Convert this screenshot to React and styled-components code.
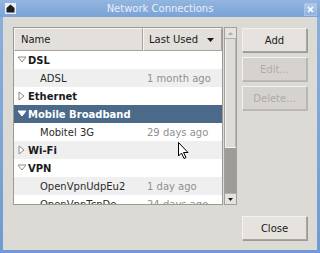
import React from "react";
import styled, { createGlobalStyle } from "styled-components";

const Global = createGlobalStyle`
  html, body { margin: 0; padding: 0; background: #dcdad5; }
  body { font-family: "DejaVu Sans", "Liberation Sans", sans-serif; }
`;

const Window = styled.div`
  width: 320px;
  height: 253px;
  box-sizing: border-box;
  display: flex;
  flex-direction: column;
  background: linear-gradient(to bottom, #8db0dc, #6f9bd2);
  padding: 0 3px 3px 3px;
  position: relative;
  overflow: hidden;
`;

const TitleBar = styled.div`
  height: 17px;
  display: flex;
  align-items: center;
  justify-content: space-between;
  margin: 0 -3px;
  padding: 0 3px 0 5px;
  background: linear-gradient(to bottom, #93b5df, #7aa3d6);
  color: #e9eff8;
  font-size: 10px;
  position: relative;
`;

const Title = styled.div`
  position: absolute;
  left: 0;
  right: 0;
  text-align: center;
  line-height: 17px;
  pointer-events: none;
`;

const CloseBox = styled.div`
  width: 11px;
  height: 11px;
  border: 1px solid #a9c3e6;
  background: linear-gradient(#b3cbea, #8fb0dd);
  display: flex;
  align-items: center;
  justify-content: center;
  margin-top: 1px;
`;

const Body = styled.div`
  flex: 1;
  background: #dcdad5;
  display: flex;
  padding: 10px 10px 10px 10px;
  gap: 5px;
`;

const ListArea = styled.div`
  display: flex;
  gap: 1px;
  height: 178px;
  width: 224px;
`;

const Tree = styled.div`
  flex: 1;
  border: 1px solid #9d9a95;
  background: #ffffff;
  overflow: hidden;
  display: flex;
  flex-direction: column;
`;

const Header = styled.div`
  display: flex;
  height: 23px;
  flex: none;
`;

const HeaderCell = styled.div`
  width: ${(p) => p.$w}px;
  flex: ${(p) => (p.$grow ? 1 : "none")};
  box-sizing: border-box;
  background: #e3e0db;
  border-top: 1px solid #f6f5f3;
  border-left: 1px solid #f6f5f3;
  border-right: 1px solid #a7a49f;
  border-bottom: 1px solid #a7a49f;
  display: flex;
  align-items: center;
  justify-content: space-between;
  padding: 0 7px 0 ${(p) => p.$pl}px;
  font-size: 10px;
  color: #1a1a1a;
`;

const Row = styled.div`
  height: 18px;
  flex: none;
  display: flex;
  align-items: center;
  font-size: 10px;
  white-space: nowrap;
  background: ${(p) => (p.$sel ? "#4b6a89" : p.$alt ? "#efefef" : "#ffffff")};
  color: ${(p) => (p.$sel ? "#ffffff" : "#1a1a1a")};
`;

const Expander = styled.div`
  width: 13px;
  margin-left: 1px;
  display: flex;
  align-items: center;
  justify-content: center;
`;

const GroupName = styled.div`
  font-weight: bold;
`;

const ChildName = styled.div`
  width: 103px;
  flex: none;
  padding-left: 26px;
  color: #2b2b2b;
`;

const When = styled.div`
  color: #8e9094;
  padding-left: 4px;
`;

const Scrollbar = styled.div`
  width: 13px;
  box-sizing: border-box;
  border: 1px solid #a3a09b;
  background: #9e9c98;
  display: flex;
  flex-direction: column;
`;

const Stepper = styled.div`
  height: 10px;
  flex: none;
  background: #e6e3de;
  border-bottom: ${(p) => (p.$top ? "1px solid #b3b0ab" : "none")};
  border-top: ${(p) => (p.$top ? "none" : "1px solid #b3b0ab")};
  display: flex;
  align-items: center;
  justify-content: center;
`;

const Thumb = styled.div`
  height: 108px;
  flex: none;
  background: #dfdcd7;
  border-left: 1px solid #f4f3f1;
  border-bottom: 1px solid #f4f3f1;
  box-shadow: inset -1px 0 0 #b8b5b0;
`;

const Trough = styled.div`
  flex: 1;
`;

const Side = styled.div`
  width: 65px;
  display: flex;
  flex-direction: column;
  gap: 5px;
  padding-top: 1px;
`;

const Button = styled.div`
  height: 24px;
  box-sizing: border-box;
  border: 1px solid ${(p) => (p.$disabled ? "#bdbab5" : "#a9a6a1")};
  border-top-color: #f3f2f0;
  border-left-color: #f3f2f0;
  box-shadow: 1px 1px 0 ${(p) => (p.$disabled ? "#b9b6b1" : "#9d9a95")};
  background: ${(p) => (p.$disabled ? "#d6d3ce" : "#e6e3de")};
  color: ${(p) => (p.$disabled ? "#aeaba6" : "#1a1a1a")};
  font-size: 10px;
  display: flex;
  align-items: center;
  justify-content: center;
  margin-top: ${(p) => (p.$push ? "auto" : "0")};
`;

const Cursor = styled.svg`
  position: absolute;
  left: 178px;
  top: 142px;
`;

const Tri = ({ dir, filled }) => {
  const d = dir === "down" ? "M1 2 L9 2 L5 7 Z" : "M2 1 L7 5 L2 9 Z";
  return (
    <svg width="10" height="10" viewBox="0 0 10 10">
      <path
        d={d}
        fill="#ffffff"
        stroke={filled ? "#ffffff" : "#8c8c8c"}
        strokeWidth="1"
        strokeLinejoin="round"
      />
    </svg>
  );
};

const rows = [
  { group: "DSL", open: true },
  { child: "ADSL", when: "1 month ago" },
  { group: "Ethernet", open: false },
  { group: "Mobile Broadband", open: true, sel: true },
  { child: "Mobitel 3G", when: "29 days ago" },
  { group: "Wi-Fi", open: false },
  { group: "VPN", open: true },
  { child: "OpenVpnUdpEu2", when: "1 day ago" },
  { child: "OpenVpnTcpDe", when: "24 days ago" },
];

export default function App() {
  return (
    <>
      <Global />
      <Window>
        <TitleBar>
          <svg width="11" height="11" viewBox="0 0 11 11">
            <rect x="0" y="0" width="11" height="11" fill="#e8eef7" />
            <path d="M5.5 1.5 L9.5 5 L9.5 9.5 L1.5 9.5 L1.5 5 Z" fill="#1e1e1e" />
          </svg>
          <Title>Network Connections</Title>
          <CloseBox>
            <svg width="7" height="7" viewBox="0 0 7 7">
              <path d="M1 1 L6 6 M6 1 L1 6" stroke="#ffffff" strokeWidth="1.6" />
            </svg>
          </CloseBox>
        </TitleBar>
        <Body>
          <ListArea>
            <Tree>
              <Header>
                <HeaderCell $w={129} $pl={6}>Name</HeaderCell>
                <HeaderCell $grow $pl={5}>
                  <span>Last Used</span>
                  <svg width="7" height="4" viewBox="0 0 7 4">
                    <path d="M0 0 L7 0 L3.5 4 Z" fill="#1a1a1a" />
                  </svg>
                </HeaderCell>
              </Header>
              {rows.map((r, i) =>
                r.group ? (
                  <Row key={i} $sel={r.sel} $alt={i % 2 === 1}>
                    <Expander>
                      <Tri dir={r.open ? "down" : "right"} filled={r.sel} />
                    </Expander>
                    <GroupName>{r.group}</GroupName>
                  </Row>
                ) : (
                  <Row key={i} $alt={i % 2 === 1}>
                    <ChildName>{r.child}</ChildName>
                    <When>{r.when}</When>
                  </Row>
                )
              )}
            </Tree>
            <Scrollbar>
              <Stepper $top>
                <svg width="5" height="3" viewBox="0 0 5 3">
                  <path d="M0 3 L5 3 L2.5 0 Z" fill="#b0ada8" />
                </svg>
              </Stepper>
              <Thumb />
              <Trough />
              <Stepper>
                <svg width="5" height="3" viewBox="0 0 5 3">
                  <path d="M0 0 L5 0 L2.5 3 Z" fill="#1a1a1a" />
                </svg>
              </Stepper>
            </Scrollbar>
          </ListArea>
          <Side>
            <Button>Add</Button>
            <Button $disabled>Edit...</Button>
            <Button $disabled>Delete...</Button>
            <Button $push>Close</Button>
          </Side>
        </Body>
        <Cursor width="12" height="18" viewBox="0 0 12 18">
          <path d="M0.5 0.5 L0.5 14 L3.5 11 L6 16.5 L8 15.5 L5.5 10.5 L10 10.5 Z" fill="#ffffff" stroke="#000000" strokeWidth="1" />
        </Cursor>
      </Window>
    </>
  );
}
